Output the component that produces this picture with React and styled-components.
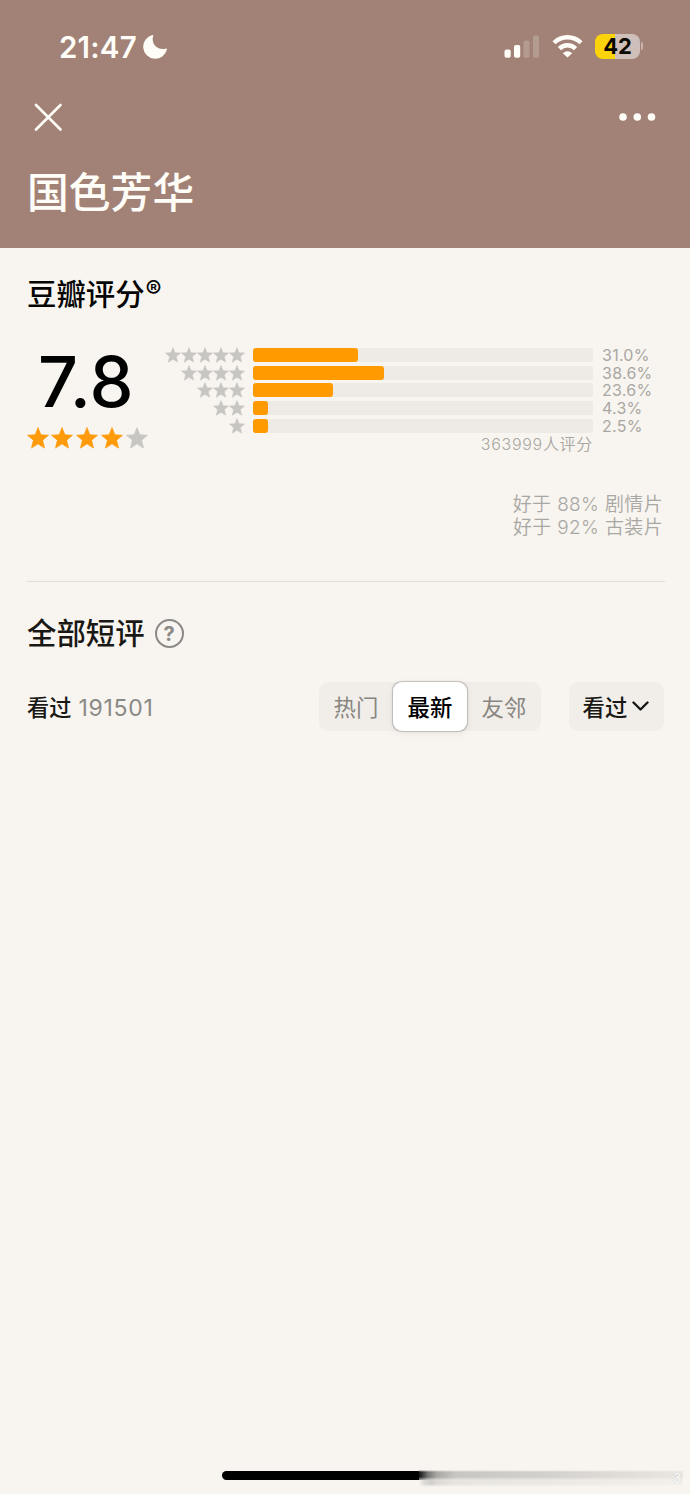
import React, { useState } from 'react';
import styled, { createGlobalStyle } from 'styled-components';

const GlobalStyle = createGlobalStyle`
  * {
    box-sizing: border-box;
  }
  body {
    margin: 0;
    background: #f8f5f0;
    font-family: Inter, 'Noto Sans CJK SC', sans-serif;
  }
  button {
    border: none;
    padding: 0;
    background: none;
    font-family: inherit;
    color: inherit;
    cursor: pointer;
  }
  svg {
    display: block;
    flex: none;
  }
`;

const Page = styled.div`
  display: flex;
  flex-direction: column;
  width: 690px;
  height: 1494px;
  overflow: hidden;
  background: #f8f5f0;
`;

const Header = styled.header`
  height: 248px;
  background: #a28276;
  color: #fffdf8;
`;

const StatusBar = styled.div`
  display: flex;
  align-items: center;
  justify-content: space-between;
  height: 92px;
  padding: 0 47px 0 59px;
`;

const StatusGroup = styled.div`
  display: flex;
  align-items: center;
`;

const Time = styled.span`
  width: 84px;
  padding-top: 1px;
  font-size: 29.5px;
  font-weight: 560;
  line-height: 36px;
  letter-spacing: 0.2px;
`;

const WifiWrap = styled.div`
  margin-left: 13px;
`;

const Battery = styled.div`
  display: flex;
  align-items: center;
  justify-content: center;
  width: 45px;
  height: 25px;
  margin-left: 12px;
  border-radius: 8px;
  background: linear-gradient(to right, #fbd30b 20.5px, #cfbfba 20.5px);
  color: #0b0800;
  font-size: 22px;
  font-weight: 700;
  letter-spacing: -0.2px;
`;

const BatteryTip = styled.div`
  width: 2px;
  height: 8px;
  margin-left: 1px;
  border-radius: 0 2px 2px 0;
  background: #c7b3ac;
`;

const NavBar = styled.nav`
  display: flex;
  align-items: center;
  justify-content: space-between;
  height: 50px;
  padding: 0 34px;
`;

const Title = styled.h1`
  margin: 21px 0 0 27px;
  font-size: 41.8px;
  font-weight: 500;
  line-height: 60px;
`;

const Main = styled.main`
  display: flex;
  flex: 1;
  flex-direction: column;
  padding: 0 26px 0 27px;
`;

const SectionTitle = styled.h2`
  display: flex;
  align-items: center;
  height: 44px;
  margin: 0;
  color: ${(props) => props.$color};
  font-size: 29.4px;
  font-weight: 500;
  line-height: 44px;
`;

const RatingTitle = styled(SectionTitle)`
  margin-top: 25px;
`;

const Registered = styled.span`
  margin: -11px 0 0 1px;
  font-size: 24px;
  font-weight: 600;
  line-height: 20px;
`;

const Rating = styled.section`
  display: flex;
  height: 109px;
  margin-top: 29px;
`;

const ScoreBlock = styled.div`
  width: 137px;
`;

const Score = styled.div`
  height: 71px;
  padding: 1px 0 0 11px;
  color: #000;
  font-size: 70px;
  font-weight: 500;
  line-height: 70px;
  letter-spacing: 0.4px;
`;

const ScoreStars = styled.div`
  display: flex;
  gap: 2.8px;
  margin: 10px 0 0 -0.5px;
`;

const Chart = styled.div`
  display: flex;
  flex-direction: column;
`;

const ChartRow = styled.div`
  display: flex;
  align-items: center;
  height: 17.75px;
`;

const RowStars = styled.div`
  display: flex;
  justify-content: flex-end;
  width: 81px;
`;

const Track = styled.div`
  width: 340px;
  height: 14px;
  margin-left: 8px;
  border-radius: 2px;
  background: #eeebe7;
`;

const Fill = styled.div`
  min-width: 15px;
  height: 100%;
  border-radius: 3px;
  background: #ff9a00;
`;

const Percent = styled.span`
  margin-left: 9px;
  color: #a9a7a3;
  font-size: 16px;
  font-weight: 370;
  line-height: 16px;
  letter-spacing: 0.25px;
`;

const Total = styled.div`
  width: 429px;
  margin-top: -1px;
  color: #a9a7a3;
  font-size: 16px;
  font-weight: 350;
  line-height: 20px;
  letter-spacing: 0.7px;
  text-align: right;
`;

const Compare = styled.div`
  margin: 38px 1px 0 0;
  color: #a9a7a3;
  font-size: 19px;
  font-weight: 350;
  line-height: 23px;
  letter-spacing: 0.35px;
  text-align: right;
`;

const Divider = styled.div`
  height: 1px;
  margin: 42px -1px 30px 0;
  background: #e1deda;
`;

const HelpBadge = styled.span`
  display: flex;
  align-items: center;
  justify-content: center;
  width: 29px;
  height: 29px;
  margin: 0 0 1px 10px;
  border: 2.5px solid #8b8986;
  border-radius: 50%;
  color: #8b8986;
  font-size: 20px;
  font-weight: 700;
  line-height: 24px;
`;

const FilterRow = styled.div`
  display: flex;
  align-items: center;
  height: 49px;
  margin-top: 26px;
`;

const Watched = styled.div`
  flex: 1;
  padding-bottom: 2px;
  color: #191815;
  font-size: 22.2px;
  font-weight: 500;
`;

const Count = styled.span`
  margin-left: 7px;
  color: #8b8986;
  font-size: 23px;
  font-weight: 370;
  letter-spacing: 0.75px;
`;

const Segments = styled.div`
  display: flex;
  height: 49px;
  border-radius: 9px;
  background: #f1eeea;
`;

const Segment = styled.button`
  width: 74px;
  height: 49px;
  padding-bottom: 2px;
  border-radius: 9px;
  font-size: 22.4px;
  color: ${(props) => (props.$active ? '#000' : '#898681')};
  font-weight: ${(props) => (props.$active ? 500 : 400)};
  background: ${(props) => (props.$active ? '#fff' : 'transparent')};
  box-shadow: ${(props) => (props.$active ? '0 0 1px 0.5px rgba(0, 0, 0, 0.2), 0 2px 8px rgba(0, 0, 0, 0.07)' : 'none')};
`;

const Dropdown = styled.button`
  display: flex;
  align-items: center;
  justify-content: center;
  gap: 5px;
  width: 95px;
  height: 49px;
  margin-left: 28px;
  padding: 0 1px 2px 0;
  border-radius: 9px;
  background: #f1eeea;
  color: #191815;
  font-size: 22.4px;
  font-weight: 500;
`;

const HomeArea = styled.footer`
  display: flex;
  align-items: flex-start;
  height: 24px;
  padding-left: 222px;
`;

const HomeBar = styled.div`
  width: 197px;
  height: 9px;
  margin-top: 1px;
  border-radius: 5px 0 0 5px;
  background: #000;
`;

// the right end of the home bar fades into a smudge
const HomeFade = styled.div`
  width: 264px;
  height: 17px;
  background:
    linear-gradient(to right, #f8f5f0, rgba(248, 245, 240, 0) 12px) 0 10px / 20px 7px no-repeat,
    linear-gradient(to bottom, #f8f5f0 0, rgba(248, 245, 240, 0) 2px, rgba(248, 245, 240, 0) 7px, rgba(248, 245, 240, 0.65) 10px, rgba(248, 245, 240, 0.65) 14px, #f8f5f0 17px),
    linear-gradient(to right, #111 0, #777 9px, #aaa8a5 18px, #c8c6c3 36px, #d2d0cc 120px, #dedbd7 190px, #eae7e2 264px);
`;

const SmudgeMark = styled.span`
  margin: 1px 0 0 -10px;
  color: #fff;
  font-size: 13px;
  line-height: 14px;
  text-shadow: 0 0 1px #aaa;
`;

const Star = ({ size, color }) => (
  <svg width={size} height={size} viewBox="0 0 24 24" fill={color} stroke={color} strokeWidth="0.8" strokeLinejoin="round">
    <path d="M12 .6l3.100 7.900 8.300.5-6.400 5.400 2.100 8.600-7.100-4.600-7.100 4.600 2.100-8.600L.6 9l8.300-.5z" />
  </svg>
);

const MoonIcon = () => (
  <svg width="25" height="25" viewBox="0 0 25 25" fill="currentColor">
    <path d="M9.400 1.100c.5-.2 1 .2.8.8-2.600 8 4.500 15.100 12.900 12.600.6-.2 1.100.3.8.9A12 12 0 1 1 9.400 1.100z" />
  </svg>
);

const SignalIcon = () => (
  <svg width="35" height="23" viewBox="0 0 35 23" fill="currentColor">
    <rect x="0.500" y="14.500" width="6.200" height="8.200" rx="2" />
    <rect x="10" y="10" width="6.200" height="12.700" rx="1.800" />
    <rect x="19.500" y="5.500" width="6" height="17.200" rx="1.600" opacity="0.2" />
    <rect x="29" y="0.500" width="6" height="22.200" rx="1.600" opacity="0.2" />
  </svg>
);

const WifiIcon = () => (
  <svg width="31" height="23" viewBox="0 0 31 23" fill="none" stroke="currentColor" strokeWidth="4.400">
    <path d="M2 7.800a19.200 19.200 0 0 1 27 0" />
    <path d="M7.400 13.600a11.400 11.400 0 0 1 16.200 0" />
    <path d="M15.500 22.500l-4.700-4.300a6.800 6.800 0 0 1 9.400 0z" fill="currentColor" stroke="none" />
  </svg>
);

const CloseIcon = () => (
  <svg width="28" height="28" viewBox="0 0 28 28" stroke="currentColor" strokeWidth="2.600" strokeLinecap="round">
    <path d="M2 2l24.500 24.500M26.500 2L2 26.500" />
  </svg>
);

const MoreIcon = () => (
  <svg width="37" height="8" viewBox="0 0 37 8" fill="currentColor">
    <circle cx="4" cy="4" r="3.800" />
    <circle cx="18.300" cy="4" r="3.800" />
    <circle cx="32.500" cy="4" r="3.800" />
  </svg>
);

const ChevronIcon = () => (
  <svg width="17" height="11" viewBox="0 0 17 11" fill="none" stroke="currentColor" strokeWidth="2.400" strokeLinecap="round" strokeLinejoin="round">
    <path d="M1.500 2.500l7 7 7-7" />
  </svg>
);

const ratings = [
  { stars: 5, percent: 31.0 },
  { stars: 4, percent: 38.6 },
  { stars: 3, percent: 23.6 },
  { stars: 2, percent: 4.3 },
  { stars: 1, percent: 2.5 },
];

const tabs = ['热门', '最新', '友邻'];

const App = () => {
  const [activeTab, setActiveTab] = useState('最新');

  return (
    <Page>
      <GlobalStyle />
      <Header>
        <StatusBar>
          <StatusGroup>
            <Time>21:47</Time>
            <MoonIcon />
          </StatusGroup>
          <StatusGroup>
            <SignalIcon />
            <WifiWrap>
              <WifiIcon />
            </WifiWrap>
            <Battery>42</Battery>
            <BatteryTip />
          </StatusGroup>
        </StatusBar>
        <NavBar>
          <button aria-label="关闭"><CloseIcon /></button>
          <button aria-label="更多"><MoreIcon /></button>
        </NavBar>
        <Title>国色芳华</Title>
      </Header>
      <Main>
        <RatingTitle $color="#050505">
          豆瓣评分<Registered>®</Registered>
        </RatingTitle>
        <Rating>
          <ScoreBlock>
            <Score>7.8</Score>
            <ScoreStars>
              {[1, 2, 3, 4, 5].map((n) => (
                <Star key={n} size={22} color={n <= 4 ? '#ff9a0a' : '#c8c6c3'} />
              ))}
            </ScoreStars>
          </ScoreBlock>
          <Chart>
            {ratings.map((row) => (
              <ChartRow key={row.stars}>
                <RowStars>
                  {Array.from({ length: row.stars }, (_, i) => (
                    <Star key={i} size={16} color="#c8c6c3" />
                  ))}
                </RowStars>
                <Track>
                  <Fill style={{ width: `${row.percent}%` }} />
                </Track>
                <Percent>{row.percent.toFixed(1)}%</Percent>
              </ChartRow>
            ))}
            <Total>363999人评分</Total>
          </Chart>
        </Rating>
        <Compare>
          <div>好于 88% 剧情片</div>
          <div>好于 92% 古装片</div>
        </Compare>
        <Divider />
        <SectionTitle $color="#191815">
          全部短评<HelpBadge>?</HelpBadge>
        </SectionTitle>
        <FilterRow>
          <Watched>
            看过<Count>191501</Count>
          </Watched>
          <Segments>
            {tabs.map((tab) => (
              <Segment key={tab} $active={tab === activeTab} onClick={() => setActiveTab(tab)}>
                {tab}
              </Segment>
            ))}
          </Segments>
          <Dropdown>
            看过
            <ChevronIcon />
          </Dropdown>
        </FilterRow>
      </Main>
      <HomeArea>
        <HomeBar />
        <HomeFade />
        <SmudgeMark>3</SmudgeMark>
      </HomeArea>
    </Page>
  );
};

export default App;
